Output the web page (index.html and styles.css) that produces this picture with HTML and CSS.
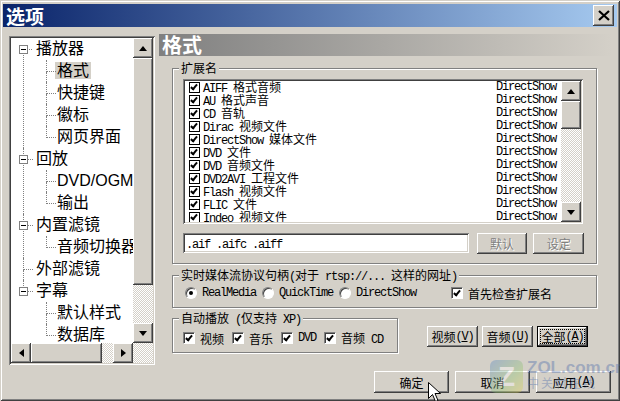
FILE: index.html
```html
<!DOCTYPE html>
<html lang="zh-CN">
<head>
    <meta charset="UTF-8">
    <title>选项</title>
    <link rel="stylesheet" href="styles.css">
</head>
<body>
<div class="win">
    <div class="titlebar">
        <span class="title">选项</span>
        <span class="btn close">
            <svg width="12" height="11" viewBox="0 0 12 11"><path d="M1 1L11 10M11 1L1 10" stroke="#000" stroke-width="2.2" fill="none"/></svg>
        </span>
    </div>

    <div class="main">
        <!-- page tree -->
        <div class="tree-box sunken">
            <div class="tree-view">
                <ul class="tree">
                    <li><i class="tog"></i><span class="lbl">播放器</span>
                        <ul>
                            <li><span class="lbl sel">格式</span></li>
                            <li><span class="lbl">快捷键</span></li>
                            <li><span class="lbl">徽标</span></li>
                            <li><span class="lbl">网页界面</span></li>
                        </ul>
                    </li>
                    <li><i class="tog"></i><span class="lbl">回放</span>
                        <ul>
                            <li><span class="lbl">DVD/OGM</span></li>
                            <li><span class="lbl">输出</span></li>
                        </ul>
                    </li>
                    <li><i class="tog"></i><span class="lbl">内置滤镜</span>
                        <ul>
                            <li><span class="lbl">音频切换器</span></li>
                        </ul>
                    </li>
                    <li><span class="lbl">外部滤镜</span></li>
                    <li><i class="tog"></i><span class="lbl">字幕</span>
                        <ul>
                            <li><span class="lbl">默认样式</span></li>
                            <li><span class="lbl">数据库</span></li>
                        </ul>
                    </li>
                </ul>
            </div>
            <div class="vscroll">
                <span class="btn sbtn"><i class="arr up"></i></span>
                <span class="btn thumb-v"></span>
                <span class="track"></span>
                <span class="btn sbtn"><i class="arr down"></i></span>
            </div>
            <div class="hscroll">
                <span class="btn sbtn"><i class="arr left"></i></span>
                <span class="btn thumb-h"></span>
                <span class="track"></span>
                <span class="btn sbtn"><i class="arr right"></i></span>
            </div>
            <div class="track"></div>
        </div>

        <!-- settings page -->
        <div class="pane">
            <div class="pane-head">格式</div>

            <div class="group ext">
                <span class="group-title">扩展名</span>
                <div class="listbox sunken">
                    <div class="items">
                        <div class="item"><span class="fcb"></span><span class="name"><span class="en">AIFF </span>格式音频</span><span class="en">DirectShow</span></div>
                        <div class="item"><span class="fcb"></span><span class="name"><span class="en">AU </span>格式声音</span><span class="en">DirectShow</span></div>
                        <div class="item"><span class="fcb"></span><span class="name"><span class="en">CD </span>音轨</span><span class="en">DirectShow</span></div>
                        <div class="item"><span class="fcb"></span><span class="name"><span class="en">Dirac </span>视频文件</span><span class="en">DirectShow</span></div>
                        <div class="item"><span class="fcb"></span><span class="name"><span class="en">DirectShow </span>媒体文件</span><span class="en">DirectShow</span></div>
                        <div class="item"><span class="fcb"></span><span class="name"><span class="en">DVD </span>文件</span><span class="en">DirectShow</span></div>
                        <div class="item"><span class="fcb"></span><span class="name"><span class="en">DVD </span>音频文件</span><span class="en">DirectShow</span></div>
                        <div class="item"><span class="fcb"></span><span class="name"><span class="en">DVD2AVI </span>工程文件</span><span class="en">DirectShow</span></div>
                        <div class="item"><span class="fcb"></span><span class="name"><span class="en">Flash </span>视频文件</span><span class="en">DirectShow</span></div>
                        <div class="item"><span class="fcb"></span><span class="name"><span class="en">FLIC </span>文件</span><span class="en">DirectShow</span></div>
                        <div class="item"><span class="fcb"></span><span class="name"><span class="en">Indeo </span>视频文件</span><span class="en">DirectShow</span></div>
                    </div>
                    <div class="vscroll">
                        <span class="btn sbtn"><i class="arr up"></i></span>
                        <span class="btn thumb-l"></span>
                        <span class="track"></span>
                        <span class="btn sbtn"><i class="arr down"></i></span>
                    </div>
                </div>
                <div class="ext-row">
                    <div class="input sunken"><span class="en">.aif .aifc .aiff</span></div>
                    <span class="btn small off">默认</span>
                    <span class="btn small off">设定</span>
                </div>
            </div>

            <div class="group rtsp">
                <span class="group-title">实时媒体流协议句柄<span class="en">(</span>对于<span class="en"> rtsp://... </span>这样的网址<span class="en">)</span></span>
                <div class="opt-row">
                    <span class="radio on"></span><span class="en opt">RealMedia</span>
                    <span class="radio"></span><span class="en opt">QuickTime</span>
                    <span class="radio"></span><span class="en opt">DirectShow</span>
                    <span class="cb on first"></span><span class="opt">首先检查扩展名</span>
                </div>
            </div>

            <div class="auto-row">
                <div class="group auto">
                    <span class="group-title">自动播放<span class="en"> (</span>仅支持<span class="en"> XP)</span></span>
                    <div class="opt-row">
                        <span class="cb on"></span><span class="opt">视频</span>
                        <span class="cb on"></span><span class="opt">音乐</span>
                        <span class="cb on"></span><span class="opt en">DVD</span>
                        <span class="cb on"></span><span class="opt">音频<span class="en"> CD</span></span>
                    </div>
                </div>
                <div class="auto-btns">
                    <span class="btn small">视频<span class="en">(<u>V</u>)</span></span>
                    <span class="btn small">音频<span class="en">(<u>U</u>)</span></span>
                    <span class="btn small focus">全部<span class="en">(<u>A</u>)</span></span>
                </div>
            </div>
        </div>
    </div>

    <div class="footer">
        <span class="btn wide">确定</span>
        <span class="btn wide">取消</span>
        <span class="btn wide">应用<span class="en">(<u>A</u>)</span></span>
    </div>

    <div class="watermark">
        <span class="wm-logo">Z</span>
        <span class="wm-text">ZOL.com.cn<small>中关村在线</small></span>
    </div>

    <svg class="cursor" width="13" height="20" viewBox="0 0 13 20">
        <path d="M0.5 0.5V16.5L4.5 12.5L7.5 19.5L10 18.5L7 11.5H12.5Z" fill="#fff" stroke="#000"/>
    </svg>
</div>
</body>
</html>
```

FILE: styles.css
```css
body {
    margin: 0;
    color: #000;
    font: 12px "Noto Sans CJK SC", sans-serif;
}

.en {
    font-family: "Liberation Mono", monospace;
    letter-spacing: -1.2px;
}

.win {
    position: relative;
    width: 620px;
    height: 401px;
    box-sizing: border-box;
    padding: 4px 3px 3px;
    background: #D4D0C8;
    box-shadow: inset 1px 1px #D4D0C8, inset -1px -1px #404040,
                inset 2px 2px #fff, inset -2px -2px #808080;
}

/* 3d bits */
.btn {
    display: inline-flex;
    align-items: center;
    justify-content: center;
    box-sizing: border-box;
    background: #D4D0C8;
    box-shadow: inset -1px -1px #404040, inset 1px 1px #fff,
                inset -2px -2px #808080, inset 2px 2px #D4D0C8;
}
.sunken {
    box-sizing: border-box;
    padding: 2px;
    background: #fff;
    box-shadow: inset 1px 1px #808080, inset -1px -1px #fff,
                inset 2px 2px #404040, inset -2px -2px #D4D0C8;
}
.track {
    background: repeating-conic-gradient(#D4D0C8 0 25%, #fff 0 50%) 0 0 / 2px 2px;
}

.titlebar {
    height: 23px;
    display: flex;
    justify-content: space-between;
    align-items: flex-start;
    padding: 0 3px;
    background: linear-gradient(to right, #0A246A, #A6CAF0);
}
.title {
    color: #fff;
    font-weight: bold;
    font-size: 19px;
    line-height: 23px;
}
.close {
    width: 21px;
    height: 21px;
    margin-top: 1px;
}

.main {
    display: flex;
    height: 338px;
}

/* tree */
.tree-box {
    width: 146px;
    height: 329px;
    margin: 9px 0 0 6px;
    display: grid;
    grid-template-columns: 1fr 20px;
    grid-template-rows: 1fr 20px;
}
.tree-view {
    overflow: hidden;
    font: 16px "Liberation Sans", "Noto Sans CJK SC", sans-serif;
}
.tree, .tree ul {
    list-style: none;
    margin: 0;
    padding: 0;
}
.tree li {
    position: relative;
    line-height: 22px;
    white-space: nowrap;
}
.tree > li {
    padding-left: 23px;
}
.tree ul li {
    padding-left: 21px;
}
.tree li::before {
    content: "";
    position: absolute;
    left: 12px;
    top: 0;
    width: 9px;
    height: 11px;
    border-left: 1px dotted #808080;
    border-bottom: 1px dotted #808080;
}
.tree li::after {
    content: "";
    position: absolute;
    left: 12px;
    top: 12px;
    bottom: 0;
    border-left: 1px dotted #808080;
}
.tree li:last-child::after {
    display: none;
}
.tree > li:first-child::before {
    border-left: none;
}
.tog {
    position: absolute;
    left: 8px;
    top: 7px;
    z-index: 1;
    width: 9px;
    height: 9px;
    box-sizing: border-box;
    border: 1px solid #808080;
    background: #fff;
}
.tog::after {
    content: "";
    position: absolute;
    left: 1px;
    top: 3px;
    width: 5px;
    height: 1px;
    background: #000;
}
.lbl {
    padding: 0 2px;
}
.lbl.sel {
    background: #D4D0C8;
}

/* scrollbars */
.vscroll {
    display: flex;
    flex-direction: column;
}
.vscroll .track {
    flex: 1;
}
.hscroll {
    display: flex;
}
.hscroll .track {
    flex: 1;
}
.sbtn {
    width: 20px;
    height: 20px;
    flex: none;
}
.thumb-v {
    height: 227px;
}
.thumb-h {
    width: 71px;
}
.thumb-l {
    height: 28px;
}
.arr {
    width: 0;
    height: 0;
    border-style: solid;
    border-color: transparent;
}
.arr.up {
    border-width: 0 4.5px 5px;
    border-bottom-color: #000;
}
.arr.down {
    border-width: 5px 4.5px 0;
    border-top-color: #000;
}
.arr.left {
    border-width: 4.5px 5px 4.5px 0;
    border-right-color: #000;
}
.arr.right {
    border-width: 4.5px 0 4.5px 5px;
    border-left-color: #000;
}

/* right page */
.pane {
    width: 453px;
    margin: 7px 0 0 4px;
}
.pane-head {
    height: 22px;
    padding-left: 3px;
    color: #fff;
    font-weight: bold;
    font-size: 20px;
    line-height: 22px;
    background: linear-gradient(to right, #808080, #D4D0C8);
}

.group {
    position: relative;
    box-sizing: border-box;
    width: 425px;
    margin-left: 13px;
    border: 1px solid #808080;
    box-shadow: inset 1px 1px #fff, 1px 1px #fff;
}
.group-title {
    position: absolute;
    top: -7px;
    left: 6px;
    padding: 0 2px;
    line-height: 12px;
    white-space: nowrap;
    background: #D4D0C8;
}

.ext {
    margin-top: 12px;
    padding: 10px 12px 9px 10px;
}
.listbox {
    width: 400px;
    height: 145px;
    display: grid;
    grid-template-columns: 1fr 20px;
}
.items {
    overflow: hidden;
}
.item {
    display: flex;
    align-items: center;
    height: 13px;
    padding: 0 5px 0 4px;
    line-height: 13px;
    white-space: nowrap;
}
.item .name {
    flex: 1;
}
.fcb {
    position: relative;
    width: 11px;
    height: 11px;
    margin-right: 3px;
    box-sizing: border-box;
    border: 1px solid #000;
    background: #fff;
}
.fcb::after, .cb.on::after {
    content: "";
    position: absolute;
    left: 2px;
    top: 0;
    width: 2px;
    height: 5px;
    border: solid #000;
    border-width: 0 2px 2px 0;
    transform: rotate(40deg);
}

.ext-row {
    display: flex;
    height: 21px;
    margin-top: 9px;
}
.input {
    width: 288px;
    height: 20px;
    margin-right: 8px;
    padding-left: 3px;
    line-height: 16px;
}
.small {
    width: 51px;
    height: 21px;
    margin-right: 6px;
}
.small:last-child {
    margin-right: 0;
}
.off {
    color: #808080;
    text-shadow: 1px 1px #fff;
}

.rtsp {
    margin-top: 11px;
    padding: 10px 0 7px 12px;
}
.opt-row {
    display: flex;
    align-items: center;
    height: 14px;
    white-space: nowrap;
}
.opt {
    margin: 0 6px 0 5px;
}
.radio {
    position: relative;
    width: 12px;
    height: 12px;
    box-sizing: border-box;
    border-radius: 50%;
    border: 1px solid;
    border-color: #808080 #fff #fff #808080;
    box-shadow: inset 1px 1px #404040;
    background: #fff;
}
.radio.on::after {
    content: "";
    position: absolute;
    left: 3px;
    top: 3px;
    width: 4px;
    height: 4px;
    border-radius: 50%;
    background: #000;
}
.cb {
    position: relative;
    width: 12px;
    height: 12px;
    box-sizing: border-box;
    border: 1px solid;
    border-color: #808080 #fff #fff #808080;
    box-shadow: inset 1px 1px #404040;
    background: #fff;
}
.cb.on::after {
    left: 3px;
    top: 1px;
}
.cb.first {
    margin-left: 29px;
}
.opt-row .opt:last-child {
    margin-right: 0;
}

.auto-row {
    display: flex;
    align-items: flex-start;
    margin-top: 10px;
}
.auto {
    width: 226px;
    padding: 12px 0 7px 10px;
}
.auto .opt {
    margin: 0 8px 0 5px;
}
.auto-btns {
    display: flex;
    margin: 8px 0 0 29px;
}
.auto-btns .small {
    margin-right: 4px;
}
.focus {
    position: relative;
    border: 1px solid #000;
}
.focus::after {
    content: "";
    position: absolute;
    inset: 2px;
    border: 1px dotted #000;
}

.footer {
    display: flex;
    justify-content: flex-end;
    gap: 6px;
    margin-top: 6px;
    padding-right: 6px;
}
.wide {
    width: 75px;
    height: 22px;
}

.watermark {
    position: absolute;
    left: 490px;
    top: 360px;
    display: flex;
    gap: 4px;
    opacity: 0.35;
    pointer-events: none;
}
.wm-logo {
    width: 33px;
    height: 33px;
    border-radius: 6px;
    background: linear-gradient(135deg, #4a7cc7, #8fc46a 60%, #e8d24a);
    color: #fff;
    font: bold 28px/33px "Liberation Sans", sans-serif;
    text-align: center;
}
.wm-text {
    display: flex;
    flex-direction: column;
    color: #3f62a8;
    font: bold 17px/16px "Liberation Sans", sans-serif;
}
.wm-text small {
    font: 12px/14px "Noto Sans CJK SC", sans-serif;
    letter-spacing: 2px;
}

.cursor {
    position: absolute;
    left: 428px;
    top: 382px;
}
```
